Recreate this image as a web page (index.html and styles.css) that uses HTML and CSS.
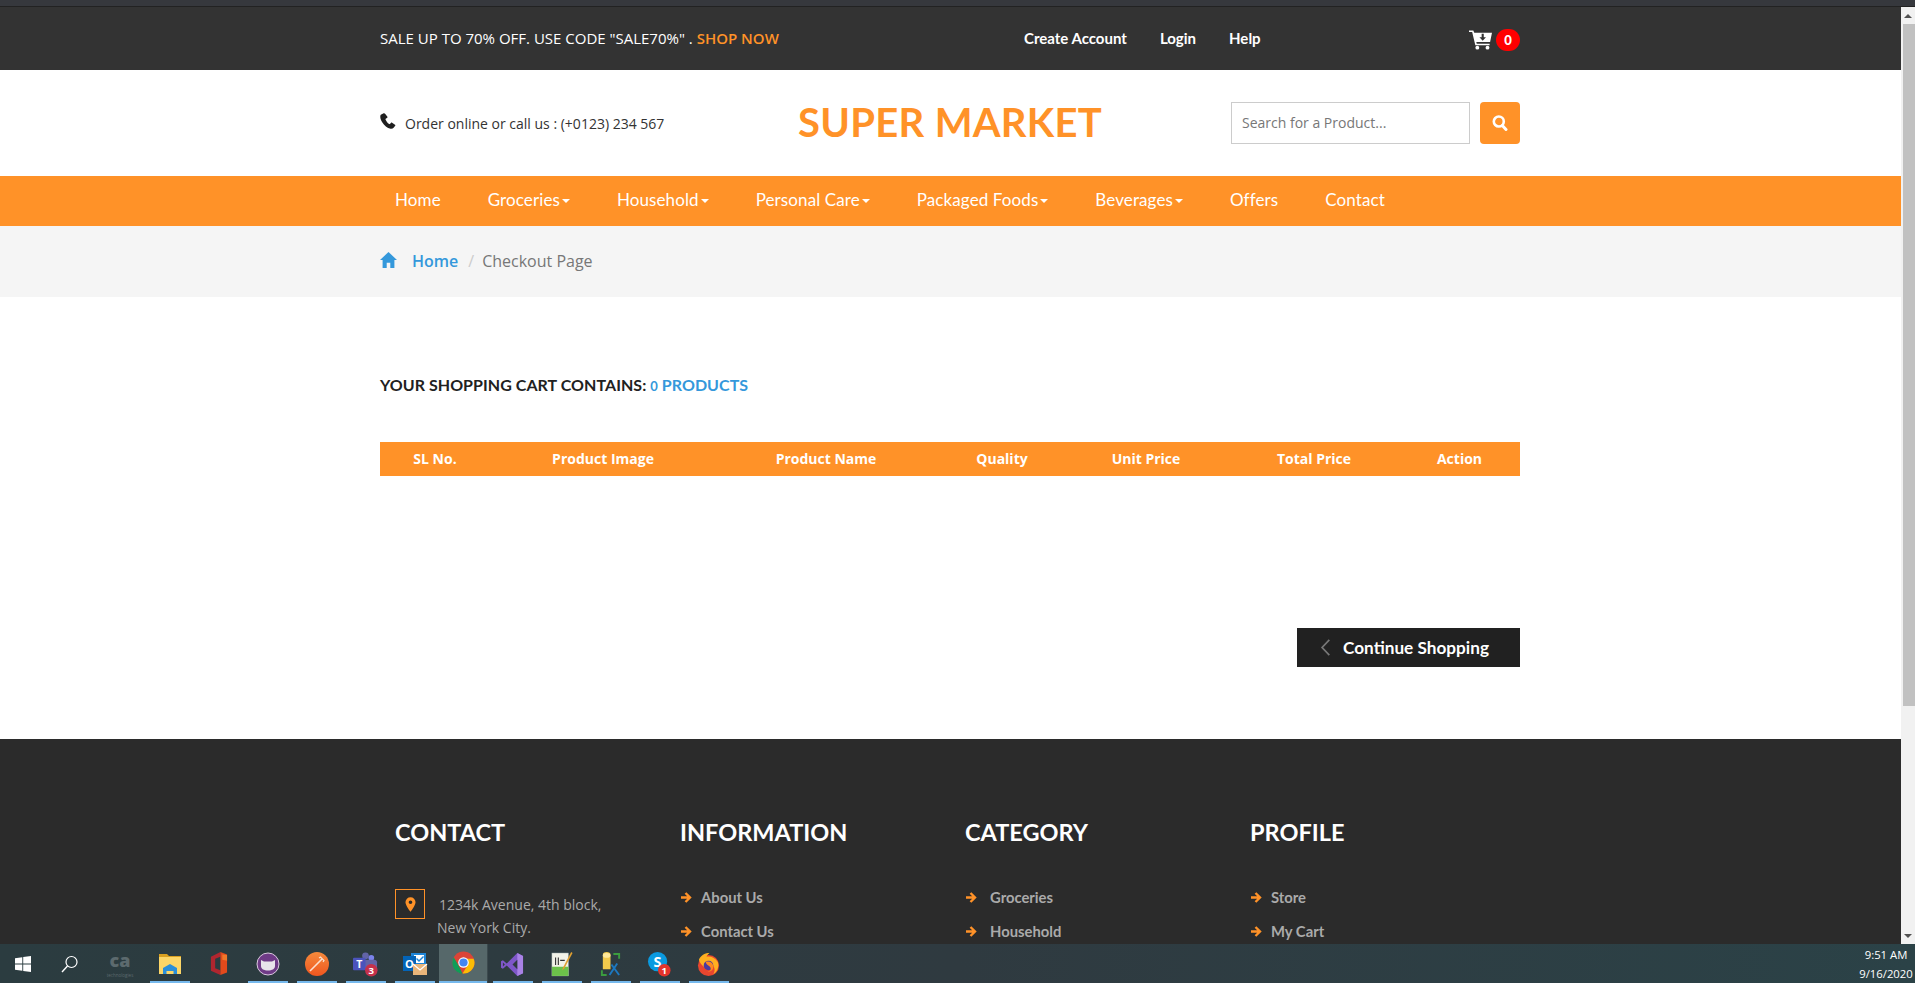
FILE: index.html
```html
<!DOCTYPE html>
<html lang="en">
<head>
<meta charset="utf-8">
<title>Super Market - Checkout</title>
<link rel="stylesheet" href="styles.css">
</head>
<body>
<div class="chrome-edge"></div>
<div class="window">
  <div class="page">
    <header class="topbar">
      <div class="container topbar-row">
        <p class="promo">SALE UP TO 70% OFF. USE CODE "SALE70%" . <a class="promo-link">SHOP NOW</a></p>
        <nav class="top-links"><a>Create Account</a><a>Login</a><a>Help</a></nav>
        <div class="cart">
          <svg class="cart-icon" viewBox="0 0 24 20"><path fill="#fff" d="M0 0h4.500l1 2.400H24l-2 9.600H7.600l.5 2h13.400v1.600H6.600L3.300 1.600H0z"/><circle cx="8.700" cy="18" r="2" fill="#fff"/><circle cx="19.300" cy="18" r="2" fill="#fff"/><path fill="#333" d="M13.200 3.500h2.200v3.600h2.300l-3.400 3.600-3.400-3.600h2.300z"/></svg>
          <span class="badge">0</span>
        </div>
      </div>
    </header>

    <section class="brandbar">
      <div class="container brand-row">
        <div class="phone">
          <svg class="phone-icon" viewBox="0 0 16 16"><path fill="#1f1f1f" d="M3.200.4.800 1.800C-.2 3 .2 6 2.200 9.200c2 3.200 5 6 8.400 6.600 1.300.2 2.300-.2 3-1l1.600-2c.3-.4.2-.8-.2-1.100l-2.900-2c-.4-.2-.8-.2-1 .1l-1.200 1.300c-.2.2-.5.2-.8 0C7.700 10.100 6 7.800 5.500 6.500c-.1-.3 0-.5.2-.7l1.500-1c.3-.2.4-.6.2-1L5.300.9C4.800.1 3.900 0 3.200.4z"/></svg>
          <span>Order online or call us : (+0123) 234 567</span>
        </div>
        <h1 class="logo">SUPER MARKET</h1>
        <form class="search">
          <input class="search-input" type="text" placeholder="Search for a Product...">
          <button class="search-btn" type="button" aria-label="Search">
            <svg viewBox="0 0 16 16" width="16" height="16"><circle cx="6.800" cy="6.500" r="5" fill="none" stroke="#fff" stroke-width="2.600"/><path d="M10.300 10.500l3.700 4" stroke="#fff" stroke-width="3" stroke-linecap="round"/></svg>
          </button>
        </form>
      </div>
    </section>

    <nav class="mainnav">
      <div class="container nav-row">
        <a>Home</a>
        <a class="drop">Groceries</a>
        <a class="drop">Household</a>
        <a class="drop">Personal Care</a>
        <a class="drop">Packaged Foods</a>
        <a class="drop">Beverages</a>
        <a>Offers</a>
        <a>Contact</a>
      </div>
    </nav>

    <div class="crumbs">
      <div class="container crumb-row">
        <svg class="home-icon" viewBox="0 0 17 16"><path fill="#3498db" d="M8.500 0 17 8h-2.600v8H10.300v-5.200H6.700V16H2.600V8H0z"/></svg>
        <a class="crumb-home">Home</a>
        <span class="crumb-sep">/</span>
        <span class="crumb-cur">Checkout Page</span>
      </div>
    </div>

    <main class="container checkout">
      <h2 class="cart-title">YOUR SHOPPING CART CONTAINS: <span class="cart-count"><span class="zero">0</span> PRODUCTS</span></h2>
      <div class="thead">
        <span>SL No.</span><span>Product Image</span><span>Product Name</span><span>Quality</span><span>Unit Price</span><span>Total Price</span><span class="th-action">Action</span>
      </div>
      <div class="actions">
        <a class="continue">
          <svg class="chev" viewBox="0 0 11 20"><path d="M10 1 1.500 10 10 19" fill="none" stroke="#777" stroke-width="2"/></svg>
          Continue Shopping
        </a>
      </div>
    </main>

    <footer class="footer">
      <div class="container footer-grid">
        <div class="fcol">
          <h3>CONTACT</h3>
          <div class="address">
            <span class="pin-box"><svg viewBox="0 0 12 16" width="11" height="15"><path fill="#ff9228" fill-rule="evenodd" d="M6 0a5.500 5.500 0 0 1 5.500 5.500C11.500 9 6 16 6 16S.5 9 .5 5.500A5.500 5.500 0 0 1 6 0zm0 3.500a2 2 0 1 0 0 4 2 2 0 0 0 0-4z"/></svg></span>
            <p>1234k Avenue, 4th block,<br><span class="addr-2">New York City.</span></p>
          </div>
        </div>
        <div class="fcol">
          <h3>INFORMATION</h3>
          <ul class="flinks">
            <li><svg class="arr" viewBox="0 0 12 12"><path d="M1 6h8.500M5.500 1.500 10 6l-4.500 4.500" fill="none" stroke="#ff9228" stroke-width="2.400"/></svg>About Us</li>
            <li><svg class="arr" viewBox="0 0 12 12"><path d="M1 6h8.500M5.500 1.500 10 6l-4.500 4.500" fill="none" stroke="#ff9228" stroke-width="2.400"/></svg>Contact Us</li>
          </ul>
        </div>
        <div class="fcol">
          <h3>CATEGORY</h3>
          <ul class="flinks wide">
            <li><svg class="arr" viewBox="0 0 12 12"><path d="M1 6h8.500M5.500 1.500 10 6l-4.500 4.500" fill="none" stroke="#ff9228" stroke-width="2.400"/></svg>Groceries</li>
            <li><svg class="arr" viewBox="0 0 12 12"><path d="M1 6h8.500M5.500 1.500 10 6l-4.500 4.500" fill="none" stroke="#ff9228" stroke-width="2.400"/></svg>Household</li>
          </ul>
        </div>
        <div class="fcol">
          <h3>PROFILE</h3>
          <ul class="flinks">
            <li><svg class="arr" viewBox="0 0 12 12"><path d="M1 6h8.500M5.500 1.500 10 6l-4.500 4.500" fill="none" stroke="#ff9228" stroke-width="2.400"/></svg>Store</li>
            <li><svg class="arr" viewBox="0 0 12 12"><path d="M1 6h8.500M5.500 1.500 10 6l-4.500 4.500" fill="none" stroke="#ff9228" stroke-width="2.400"/></svg>My Cart</li>
          </ul>
        </div>
      </div>
    </footer>
  </div>

  <div class="scrollbar">
    <span class="arrow-up"></span>
    <span class="thumb"></span>
    <span class="arrow-down"></span>
  </div>
</div>

<div class="taskbar">
  <div class="tile"><svg viewBox="0 0 16 16" width="16" height="16"><path fill="#fff" d="M0 2.300 7.300 1.300v6.300H0zM8.200 1.100 16 0v7.600H8.200zM0 8.400h7.300v6.300L0 13.700zM8.200 8.400H16V16l-7.800-1.100z"/></svg></div>
  <div class="tile"><svg viewBox="0 0 18 18" width="18" height="18"><circle cx="10.500" cy="7" r="5.500" fill="none" stroke="#fff" stroke-width="1.200"/><path d="M6.500 11 1 17" stroke="#fff" stroke-width="1.400"/></svg></div>
  <div class="tile tile-ca"><svg viewBox="0 0 36 39" width="36" height="39"><text class="ca-big" x="18" y="23">ca</text><text class="ca-small" x="18" y="33">technologies</text></svg></div>
  <div class="tile pinned"><svg viewBox="0 0 22 20" width="22" height="20"><path fill="#d9a021" d="M0 0h8l2 2h12v4H0z"/><path fill="#fcd667" d="M0 3h22v17H0z"/><path fill="#2a8fd9" d="M4 14l7-4 7 4v6h-3.500v-3h-7v3H4z"/></svg></div>
  <div class="tile"><svg viewBox="0 0 20 24" width="19" height="23"><path fill="#b0262f" d="M2 5 12 0v5L6.500 7v10L12 19v5L2 19.500z"/><path fill="#e34a1c" d="M12 0l7 2.500v19L12 24z"/><path fill="#f0782a" d="M14 2.500l5 .5v6l-5-1z"/></svg></div>
  <div class="tile pinned"><svg viewBox="0 0 24 24" width="24" height="24"><circle cx="12" cy="12" r="11" fill="#6e3a86" stroke="#d9c9de" stroke-width="1"/><path fill="#e8e4ea" d="M5 8l3 1.500h8L19 8v6c0 3-3 4.500-7 4.500S5 17 5 14z"/></svg></div>
  <div class="tile pinned"><svg viewBox="0 0 24 24" width="24" height="24"><defs><linearGradient id="og" x1="0" y1="0" x2="0" y2="1"><stop offset="0" stop-color="#f58a3c"/><stop offset="1" stop-color="#f0561f"/></linearGradient></defs><circle cx="12" cy="12" r="12" fill="url(#og)"/><path d="M5 19 17 7" stroke="#fbe0d0" stroke-width="1.600"/><path d="M14 6l1.500-1 3.500 3.500-1 1.500" fill="none" stroke="#fbe0d0" stroke-width="1.200"/></svg></div>
  <div class="tile pinned"><svg viewBox="0 0 28 26" width="27" height="25"><circle cx="20" cy="6" r="3" fill="#7b83eb"/><circle cx="14" cy="4" r="3.500" fill="#6264a7"/><path fill="#6264a7" d="M9 8h14a3 3 0 0 1 3 3v7H9z"/><rect x="1" y="6" width="13" height="13" rx="1" fill="#4b53bc"/><text class="tile-t" x="7.500" y="16.500">T</text><circle cx="20" cy="19" r="6.500" fill="#c4314b"/><text class="tile-n" x="20" y="23">3</text></svg></div>
  <div class="tile pinned"><svg viewBox="0 0 26 26" width="26" height="26"><rect x="9" y="2" width="15" height="13" fill="#1f86d8"/><path fill="#fff" d="M12 4h10v8H12z"/><path fill="#1f86d8" d="M15 7l2 2 4-4 1 1-5 5-3-3z"/><rect x="1" y="5" width="13" height="15" fill="#0364b8"/><text class="tile-t" x="7.500" y="16.500">O</text><rect x="11" y="13" width="14" height="11" fill="#e8b57a"/><path d="M11 13l7 6 7-6" fill="none" stroke="#fff" stroke-width="1.200"/></svg></div>
  <div class="tile active"><svg viewBox="0 0 24 24" width="23" height="23"><circle cx="12" cy="12" r="11.500" fill="#db4437"/><path fill="#0f9d58" d="M1.800 6.500 7 15.500l4 8.200A11.500 11.500 0 0 1 1.800 6.500z"/><path fill="#fbbc05" d="M23.500 12A11.500 11.500 0 0 1 11 23.500l5.500-9-1-6.500h7A11.500 11.500 0 0 1 23.500 12z"/><circle cx="12" cy="12" r="5.500" fill="#fff"/><circle cx="12" cy="12" r="4.300" fill="#4285f4"/></svg></div>
  <div class="tile-gap"></div>
  <div class="tile pinned"><svg viewBox="0 0 24 26" width="23" height="25"><path fill="#7e57c9" d="M17 1l6 3v18l-6 3L6 14 2 17.500 0 16.500v-7L2 8.500 6 12z"/><path fill="#a982e6" d="M17 1l6 3v18l-6 3z"/><path fill="#2f3a40" d="M17 8l-5 5 5 5z"/><path fill="#2f3a40" d="M2 11l2 2-2 2z"/></svg></div>
  <div class="tile pinned"><svg viewBox="0 0 24 28" width="22" height="26"><rect x="1" y="2" width="18" height="25" fill="#f2f2e8" stroke="#9aa" stroke-width=".5"/><path fill="#6cc24a" d="M1 17h18v10H1z"/><path d="M5 7v8M8 7v8M10 10h5" stroke="#333" stroke-width="1.200"/><path d="M22 1 13 18l-1 3 2.500-2L23.500 2z" fill="#e0a030"/></svg></div>
  <div class="tile pinned"><svg viewBox="0 0 24 26" width="23" height="25"><path fill="#f2c94c" d="M4 3a4 3 0 0 1 8 0v15H4z"/><ellipse cx="8" cy="3.500" rx="4" ry="2.500" fill="#ffe89a"/><path d="M15 2h6v5M3 19v5h5" fill="none" stroke="#3b9c3f" stroke-width="2"/><path d="M11 24l8-12M13 13l8 11" stroke="#1c78c0" stroke-width="2"/></svg></div>
  <div class="tile pinned"><svg viewBox="0 0 26 26" width="25" height="25"><circle cx="11" cy="10" r="10" fill="#0a9ae0"/><text class="tile-s" x="11" y="16">S</text><circle cx="18" cy="19" r="6.500" fill="#e5342b"/><text class="tile-n" x="18" y="22.500">1</text></svg></div>
  <div class="tile pinned"><svg viewBox="0 0 24 26" width="23" height="25"><circle cx="12" cy="14" r="11" fill="#e8462f"/><path fill="#ffb020" d="M2 8c2-5 7-7 11-7-2 2-3 3-3 4 4-1 9 1 12 6 1 5-1 10-5 12 3-4 1-10-4-11-3 0-5 2-5 4-3-2-5-5-6-8z"/><circle cx="12" cy="14" r="5" fill="#4a3aa0"/><path fill="#ff8a1f" d="M9 10c4-1 8 1 8 5s-3 6-6 5c3 0 4-2 3-4s-4-2-5-6z"/></svg></div>
  <div class="clock"><span>9:51 AM</span><span>9/16/2020</span></div>
</div>
</body>
</html>
```
FILE: styles.css
```css
* { box-sizing: border-box; }
html, body { margin: 0; height: 100%; overflow: hidden; }
body {
  display: flex;
  flex-direction: column;
  height: 983px;
  font-family: "Open Sans", "Liberation Sans", sans-serif;
  font-size: 14px;
  color: #333;
  background: #fff;
}
p, h1, h2, h3, ul { margin: 0; padding: 0; }
ul { list-style: none; }

.chrome-edge { height: 7px; flex: none; background: #36383d; border-bottom: 1px solid #222; }
.window { flex: 1; display: flex; min-height: 0; }
.page { flex: 1; min-width: 0; overflow: hidden; }

.container { width: 1140px; margin-left: 380px; }

.topbar { height: 63px; background: #333; color: #fff; }
.topbar-row { height: 100%; display: flex; align-items: center; }
.promo { width: 644px; font-size: 15px; margin-top: -2px; }
.promo-link { color: #ff9228; font-weight: 600; }
.top-links { display: flex; gap: 33px; font-family: Lato, sans-serif; font-weight: 700; font-size: 15px; margin-top: -1px; }
.cart { margin-left: auto; display: flex; align-items: center; gap: 4px; margin-top: 3px; }
.cart-icon { width: 23px; height: 20px; }
.badge {
  width: 24px; height: 22px; border-radius: 11px; background: #f00; color: #fff;
  font-family: Lato, sans-serif; font-weight: 900; font-size: 13px; line-height: 22px; text-align: center;
}

.brandbar { height: 106px; background: #fff; }
.brand-row { height: 100%; display: flex; align-items: center; }
.phone { width: 418px; display: flex; align-items: center; gap: 9px; color: #333; font-size: 14px; margin-top: 1px; }
.phone-icon { width: 16px; height: 16px; margin-top: -6px; }
.logo { width: 433px; font-family: Lato, sans-serif; font-weight: 700; font-size: 40px; letter-spacing: .3px; color: #ff9228; margin-top: -2px; }
.search { display: flex; gap: 10px; margin-top: 0; }
.search-input {
  width: 239px; height: 42px; border: 1px solid #ccc; padding: 0 10px 2px; outline: none;
  font-family: "Open Sans", sans-serif; font-size: 14px; color: #555; background: #fff;
}
.search-input::placeholder { color: #777; opacity: 1; }
.search-btn { width: 40px; height: 42px; border: 0; border-radius: 4px; background: #ff9228; display: flex; align-items: center; justify-content: center; padding: 0; }

.mainnav { height: 50px; background: #ff9228; }
.nav-row { height: 100%; display: flex; align-items: center; gap: 47px; padding: 0 0 3px 15px; font-family: Lato, sans-serif; font-size: 17px; letter-spacing: .1px; color: #fff; }
.drop { display: flex; align-items: center; gap: 2px; }
.drop::after { content: ""; width: 0; height: 0; margin-top: 2px; border-left: 4px solid transparent; border-right: 4px solid transparent; border-top: 4px solid #fff; }

.crumbs { height: 71px; background: #f5f5f5; }
.crumb-row { height: 100%; display: flex; align-items: center; font-size: 16px; padding-bottom: 2px; }
.home-icon { width: 17px; height: 16px; margin-right: 15px; margin-top: -2px; }
.crumb-home { color: #3498db; font-weight: 600; }
.crumb-sep { color: #ccc; margin: 0 8px 0 10px; }
.crumb-cur { color: #777; }

.checkout { height: 442px; padding-top: 77px; }
.cart-title { font-family: Lato, sans-serif; font-size: 16px; font-weight: 700; line-height: 22px; color: #212121; letter-spacing: .05px; }
.cart-count { color: #3498db; }
.zero { font-size: 13px; }
.thead {
  margin-top: 45px; height: 34px; padding-bottom: 2px; background: #ff9228; color: #fff; font-weight: 700; font-size: 14px;
  display: grid; grid-template-columns: 110px 226px 220px 132px 156px 180px 116px; align-items: center; text-align: center;
}
.th-action { padding-right: 5px; }
.actions { margin-top: 152px; display: flex; justify-content: flex-end; }
.continue {
  width: 223px; height: 39px; background: #212121; color: #fff; display: flex; align-items: center; gap: 12px; padding-left: 23px;
  font-family: Lato, sans-serif; font-weight: 700; font-size: 17.200px;
}
.chev { width: 11px; height: 17px; }

.footer { background: #2b2b2b; height: 300px; padding-top: 79px; }
.footer-grid { display: grid; grid-template-columns: repeat(4, 285px); }
.fcol { padding-left: 15px; }
.fcol h3 { font-family: Lato, sans-serif; font-weight: 700; font-size: 23.500px; line-height: 28px; color: #fff; margin-bottom: 44px; }
.address { display: flex; align-items: flex-start; color: #aaa; font-size: 14px; line-height: 23px; margin-top: -1px; }
.pin-box { width: 30px; height: 30px; border: 1px solid #ff9228; display: flex; align-items: center; justify-content: center; flex: none; margin-right: 14px; }
.address p { padding-top: 4px; }
.addr-2 { margin-left: -2px; }
.flinks { margin-top: -10px; font-family: Lato, sans-serif; font-weight: 700; font-size: 14.800px; color: #aaa; }
.flinks li { height: 34px; display: flex; align-items: center; gap: 9px; }
.arr { width: 12px; height: 13px; flex: none; }
.flinks.wide li { gap: 13px; }

.scrollbar { width: 14px; flex: none; background: #f1f1f1; display: flex; flex-direction: column; align-items: flex-end; }
.arrow-up, .arrow-down { width: 14px; height: 17px; flex: none; position: relative; }
.arrow-up::after, .arrow-down::after { content: ""; position: absolute; left: 3px; width: 0; height: 0; border-left: 4px solid transparent; border-right: 4px solid transparent; }
.arrow-up::after { top: 7px; border-bottom: 4px solid #505050; }
.arrow-down::after { bottom: 6px; border-top: 4px solid #505050; }
.thumb { width: 12px; height: 682px; background: #c1c1c1; }
.arrow-down { margin-top: auto; }

.taskbar { flex: none; height: 39px; display: flex; align-items: center; background: linear-gradient(90deg, #2b3c40 0%, #2f3a40 50%, #2b4247 100%); color: #fff; }
.tile { width: 49px; height: 39px; flex: none; display: flex; align-items: center; justify-content: center; }
.tile:first-child { width: 45px; }
.tile-ca { width: 51px; }
.pinned { background: linear-gradient(#76b9ed, #76b9ed) center bottom / 40px 2px no-repeat; padding-top: 1px; }
.active { background: #56686a; border-bottom: 2px solid #76b9ed; width: 48px; }
.tile-gap { width: 1px; height: 39px; background: #3c4a4e; flex: none; }
.tile-t, .tile-s, .tile-n { font-family: "Open Sans", sans-serif; font-weight: 700; fill: #fff; text-anchor: middle; }
.tile-t { font-size: 11px; }
.tile-s { font-size: 15px; }
.tile-n { font-size: 10px; }
.ca-big { font-family: "Open Sans", sans-serif; font-weight: 800; font-size: 18px; fill: #5c6a6e; text-anchor: middle; }
.ca-small { font-family: "Open Sans", sans-serif; font-size: 4.500px; fill: #5c6a6e; text-anchor: middle; }
.clock { margin-left: auto; width: 58px; display: flex; flex-direction: column; align-items: center; font-family: "Open Sans", sans-serif; font-size: 11.300px; line-height: 19px; }
```
